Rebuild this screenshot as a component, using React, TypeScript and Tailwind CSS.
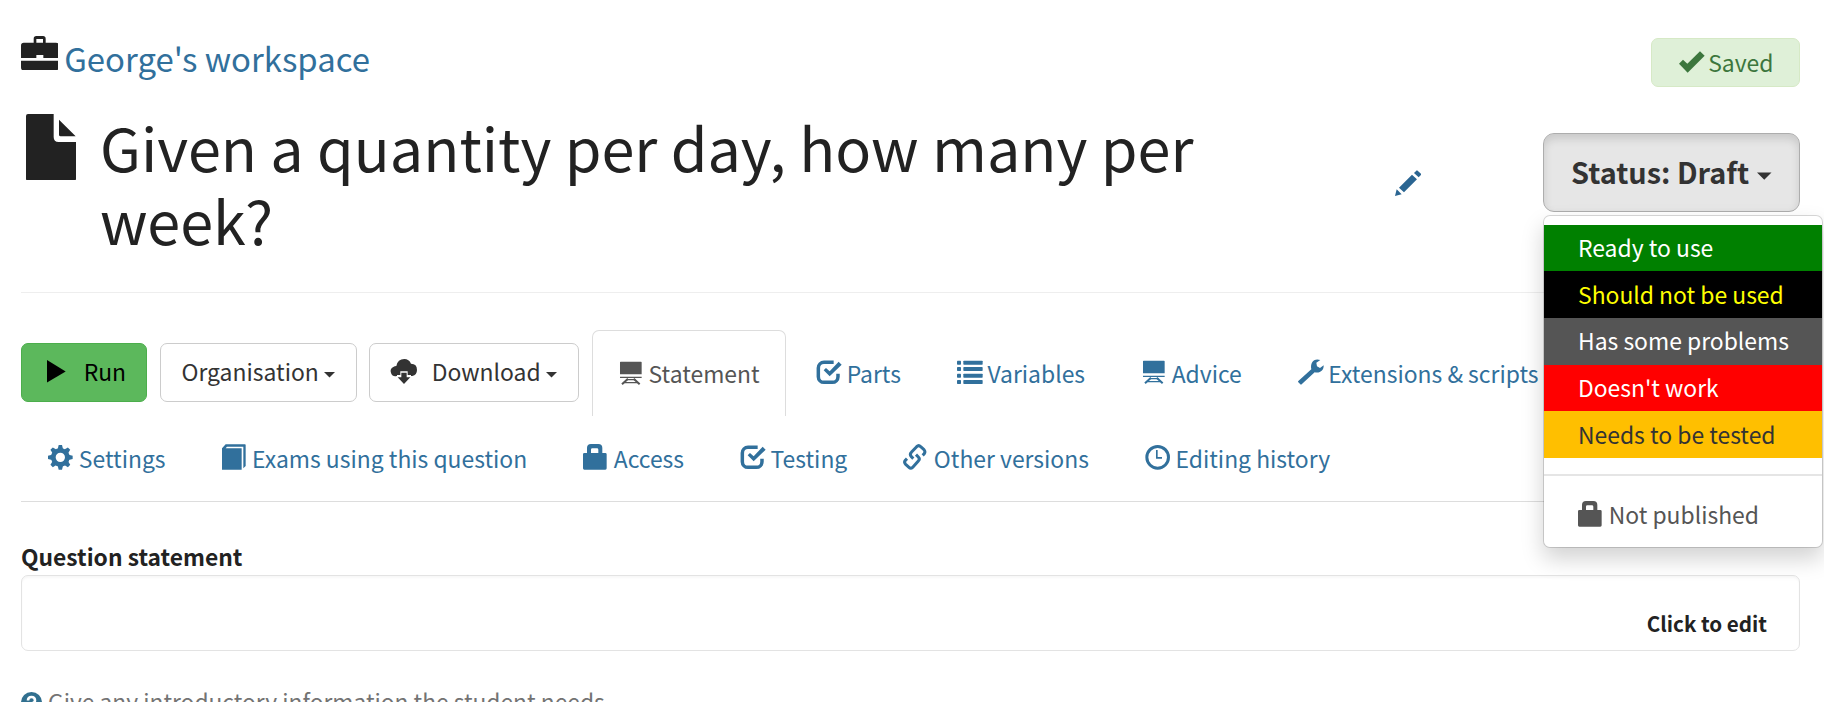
import type { ReactNode } from "react";

type IconProps = { className?: string };

function Glyph({ children, className = "" }: { children: ReactNode; className?: string }) {
  return (
    <svg viewBox="0 0 77 77" fill="currentColor" className={`h-[25.67px] w-[25.67px] shrink-0 overflow-visible ${className}`}>
      {children}
    </svg>
  );
}

const Blackboard = () => (
  <Glyph>
    <path d="M8 5h61q2 0 2 2v36H6V7q0-2 2-2zM6 50h65v4H6z" />
    <path d="M30 56L12 73M47 56l18 17" stroke="currentColor" strokeWidth="6" />
    <path d="M24 57h29v4H24zM19 66h39v4H19z" />
  </Glyph>
);

const CheckBox = () => (
  <Glyph>
    <path
      d="M53 10H24A17 17 0 0 0 7 27V53A17 17 0 0 0 24 70H49A17 17 0 0 0 66 53V44"
      fill="none"
      stroke="currentColor"
      strokeWidth="10.500"
    />
    <path d="M23 34l7-7 11 10L68 8l9 9-36 35z" />
  </Glyph>
);

const ListIcon = () => (
  <Glyph>
    {[5, 24, 44, 63].map((y) => (
      <g key={y}>
        <rect x="0" y={y} width="12" height="12" rx="2" />
        <rect x="19" y={y} width="58" height="12" rx="2" />
      </g>
    ))}
  </Glyph>
);

const Wrench = () => (
  <Glyph>
    <path d="M1 66L40 31C36 14 46-4 67 3L55 11L57 22L66 27L77 19C78 34 66 44 50 40L11 76Q9 78 7 76L1 70Q-1 68 1 66z" />
  </Glyph>
);

const Gear = () => (
  <Glyph>
    <circle cx="37" cy="40" r="21" fill="none" stroke="currentColor" strokeWidth="14" />
    {[0, 45, 90, 135, 180, 225, 270, 315].map((a) => (
      <path key={a} d="M29 15L32 3H42L45 15z" transform={`rotate(${a} 37 40)`} />
    ))}
  </Glyph>
);

const Book = () => (
  <Glyph className="translate-x-[1px]">
    <path d="M0 77V13L11 1H69Q71 1 71 3V66L64 73V8H15L11 13H59V77z" />
  </Glyph>
);

const Lock = () => (
  <Glyph>
    <path
      fillRule="evenodd"
      d="M4 27H12V12Q12 0 24 0H46Q58 0 58 12V27H67Q71 27 71 31V73Q71 77 67 77H4Q0 77 0 73V31Q0 27 4 27zM24 27H46V17Q46 13 42 13H28Q24 13 24 17z"
    />
  </Glyph>
);

const LinkIcon = () => (
  <Glyph>
    <g fill="none" stroke="currentColor" strokeWidth="9" strokeLinejoin="round">
      <path d="M31 44L25 38Q19 31 25 25L41 8Q47 2 53 8L63 17Q68 23 64 29L59 34" />
      <path d="M39 32L46 39Q52 45 46 51L30 69Q24 76 18 70L8 61Q2 55 7 49L12 44" />
    </g>
  </Glyph>
);

const Clock = () => (
  <Glyph>
    <circle cx="38" cy="40" r="32.5" fill="none" stroke="currentColor" strokeWidth="9" />
    <path d="M33 18H38V39H51V44H33z" />
  </Glyph>
);

const Tick = () => (
  <Glyph>
    <path d="M0 41L12 29L25 41L63 4L77 17L26 68z" />
  </Glyph>
);

const CloudDownload = () => (
  <Glyph>
    <path d="M17 51A14.500 14.500 0 0 1 7 24Q11 21 16 21Q20 0 40 0Q54 0 60 14Q78 14 78 33Q78 48 64 51H60V48H50V37H28V48H18V51z" />
    <path d="M31 41H47V55H58L39 75L20 55H31z" />
  </Glyph>
);

const Play = () => (
  <svg viewBox="0 0 56 67" fill="currentColor" className="mr-[18px] h-[22.500px] w-[18.700px]">
    <path d="M0 0L56 34L0 67z" />
  </svg>
);

const Briefcase = () => (
  <svg viewBox="0 0 113 103" fill="currentColor" className="-ml-[0.500px] h-[34.3px] w-[37.7px] shrink-0">
    <path
      fillRule="evenodd"
      d="M8 20H38V8Q38 0 46 0H66Q74 0 74 8V20H105Q113 20 113 28V66H67V57H46V66H0V28Q0 20 8 20zM46 20H66V9H46zM0 74H113V95Q113 103 105 103H8Q0 103 0 95z"
    />
  </svg>
);

const FileIcon = () => (
  <svg viewBox="0 0 150 200" fill="currentColor" className="h-[66.7px] w-[50px] shrink-0">
    <path d="M6 0H83V69Q83 84 98 84H150V194Q150 200 144 200H6Q0 200 0 194V6Q0 0 6 0zM99 17L149 67H104Q99 67 99 62z" />
  </svg>
);

const Pencil = ({ className = "" }: IconProps) => (
  <svg viewBox="0 0 79 78" fill="currentColor" className={`h-[26px] w-[26.3px] ${className}`}>
    <path d="M0 78L5 58L20 73zM12 53L51 14L66 28L27 67zM57 9L64 2Q66 0 68 2L78 11Q80 13 78 15L71 22z" />
  </svg>
);

const Caret = ({ className = "" }: IconProps) => (
  <svg viewBox="0 0 14 7" fill="currentColor" className={className}>
    <path d="M0 0H14L7 7z" />
  </svg>
);

const btn = "flex h-[59px] items-center rounded-[7px] border pb-[2px] text-[#333]";

function Tab({ icon, label, active = false }: { icon: ReactNode; label: string; active?: boolean }) {
  return (
    <li
      className={
        active
          ? "mr-[3.300px] flex h-[86px] items-center gap-[5px] rounded-t-[7px] border border-b-0 border-[#ddd] px-[25.4px] pb-[2px] text-[#555]"
          : "mr-[2.600px] flex h-[86px] items-center gap-[5px] border border-transparent px-[25.67px] pb-[2px]"
      }
    >
      {icon}
      <span className="pt-[2px]">{label}</span>
    </li>
  );
}

const statuses = [
  { label: "Ready to use", cls: "h-[46px] bg-[#008000] text-white pb-[1px]" },
  { label: "Should not be used", cls: "h-[47px] bg-black text-[#ff0] pb-[1px]" },
  { label: "Has some problems", cls: "h-[47px] bg-[#555] text-white pb-[3px]" },
  { label: "Doesn't work", cls: "h-[46px] bg-[#f00] text-white pb-[1px]" },
  { label: "Needs to be tested", cls: "h-[47px] bg-[#ffbf00] text-[#333] pb-[1px]" },
];

export default function App() {
  return (
    <div className="h-[708px] w-[1839px] overflow-hidden bg-white">
      <div className="h-[702px] w-[1824px] overflow-hidden pl-[21px] pr-[24px] font-['Noto_Sans_CJK_SC','Source_Sans_Pro',sans-serif] text-[22.900px] leading-[36.67px] whitespace-nowrap text-[#222]">
        <header className="flex h-[293px] justify-between border-b border-[#eee]">
          <div className="pt-[36px]">
            <div className="flex h-[44px] gap-[6px]">
              <Briefcase />
              <a className="text-[32.9px] leading-[44px] text-[#31709c]">George's workspace</a>
            </div>
            <div className="flex pt-[30px]">
              <div className="ml-[5px] pt-[3.500px]">
                <FileIcon />
              </div>
              <h1 className="ml-[24px] w-[1180px] text-[59.350px] leading-[72.6px] whitespace-normal">
                Given a quantity per day, how many per week?
              </h1>
              <Pencil className="mt-[60px] ml-[115px] text-[#2a6592]" />
            </div>
          </div>
          <div className="flex flex-col items-end pt-[38px]">
            <div className="flex h-[49px] w-[149px] items-center gap-[4px] rounded-[7px] border border-[#d6e9c6] bg-[#dff0d8] pl-[26.500px] text-[#3c763d]">
              <Tick />
              <span>Saved</span>
            </div>
            <div className="relative mt-[46px]">
              <button className="flex h-[79px] w-[257px] items-center rounded-[11px] border border-[#adadad] bg-[#e6e6e6] pb-[2px] pl-[27px] text-[28.9px] font-bold text-[#333] shadow-[inset_0_5px_9px_rgba(0,0,0,0.125)]">
                Status: Draft
                <Caret className="mt-[8px] ml-[8px] h-[8px] w-[14.500px]" />
              </button>
              <ul className="absolute top-[82px] left-0 z-10 h-[333px] w-[280px] rounded-[7px] border border-black/15 bg-white bg-clip-padding pt-[9px] shadow-[0_11px_22px_rgba(0,0,0,0.175)]">
                {statuses.map((s) => (
                  <li key={s.label} className={`flex items-center pl-[34px] ${s.cls}`}>
                    {s.label}
                  </li>
                ))}
                <li className="mt-[16px] h-[2px] bg-[#e5e5e5]" />
                <li className="mt-[18px] flex h-[40px] items-center gap-[5px] pl-[34px] text-[#555]">
                  <Lock />
                  <span>Not published</span>
                </li>
              </ul>
            </div>
          </div>
        </header>

        <nav className="mt-[37px] flex h-[172px] flex-col border-b border-[#ddd] text-[#31709c]">
          <div className="flex h-[85px]">
            <button className={`${btn} mt-[13px] w-[126px] border-[#4cae4c] bg-[#5cb85c] pl-[25px] text-black`}>
              <Play />
              Run
            </button>
            <button className={`${btn} mt-[13px] ml-[13px] w-[197px] border-[#ccc] pl-[20.500px]`}>
              Organisation
              <Caret className="mt-[7px] ml-[5.500px] h-[5.500px] w-[11px]" />
            </button>
            <button className={`${btn} mt-[13px] ml-[12px] w-[210px] border-[#ccc] pl-[21px]`}>
              <CloudDownload />
              <span className="ml-[15px]">Download</span>
              <Caret className="mt-[7px] ml-[5.500px] h-[5.500px] w-[11px]" />
            </button>
            <ul className="ml-[12.500px] flex">
              <Tab icon={<Blackboard />} label="Statement" active />
              <Tab icon={<CheckBox />} label="Parts" />
              <Tab icon={<ListIcon />} label="Variables" />
              <Tab icon={<Blackboard />} label="Advice" />
              <Tab icon={<Wrench />} label="Extensions & scripts" />
            </ul>
          </div>
          <ul className="flex pl-[0.500px]">
            <Tab icon={<Gear />} label="Settings" />
            <Tab icon={<Book />} label="Exams using this question" />
            <Tab icon={<Lock />} label="Access" />
            <Tab icon={<CheckBox />} label="Testing" />
            <Tab icon={<LinkIcon />} label="Other versions" />
            <Tab icon={<Clock />} label="Editing history" />
          </ul>
        </nav>

        <section className="pt-[36px]">
          <h2 className="h-[36.67px] pt-[1px] text-[22.800px] font-bold">Question statement</h2>
          <div className="flex h-[76px] items-end justify-end rounded-[7px] border border-[#e3e3e3] pr-[32px] pb-[8px] shadow-[inset_0_2px_2px_rgba(0,0,0,0.03)]">
            <span className="text-[20.600px] font-bold">Click to edit</span>
          </div>
          <p className="mt-[33px] flex h-[37px] items-center gap-[6px] text-[22.800px] text-[#737373]">
            <svg viewBox="0 0 21 21" className="h-[21px] w-[21px]">
              <circle cx="10.500" cy="10.500" r="10.500" fill="#31708f" />
              <path d="M7 8.500Q7 5 10.500 5T14 8.500Q14 10 12 11T10.500 13.500" fill="none" stroke="#fff" strokeWidth="2.600" />
              <path d="M9 15h3v3H9z" fill="#fff" />
            </svg>
            <span>Give any introductory information the student needs.</span>
          </p>
        </section>
      </div>
    </div>
  );
}
